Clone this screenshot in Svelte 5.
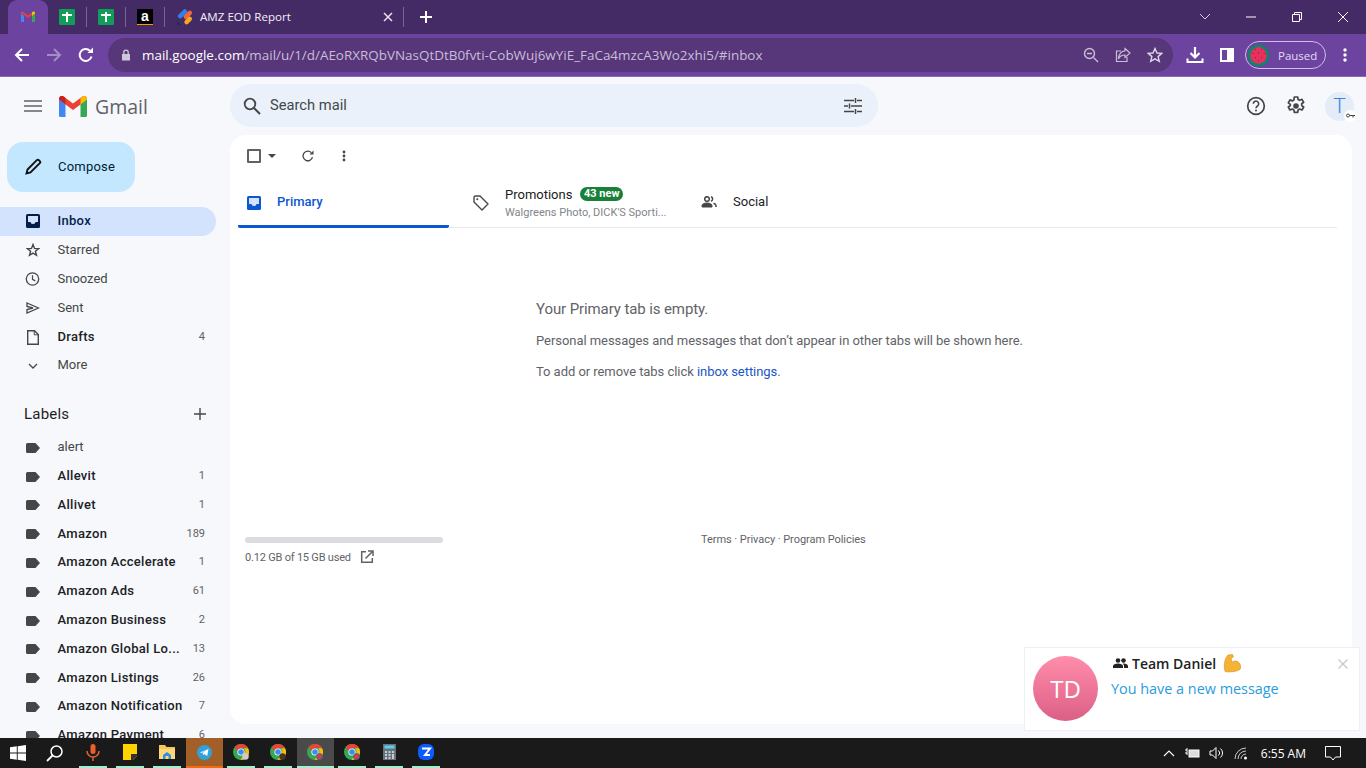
<script>
  const nav = [
    { name: "Inbox", icon: "inbox", active: true },
    { name: "Starred", icon: "star" },
    { name: "Snoozed", icon: "clock" },
    { name: "Sent", icon: "sent" },
    { name: "Drafts", icon: "draft", bold: true, count: "4" },
    { name: "More", icon: "chev" },
  ];

  const labels = [
    { name: "alert" },
    { name: "Allevit", count: "1", bold: true },
    { name: "Allivet", count: "1", bold: true },
    { name: "Amazon", count: "189", bold: true },
    { name: "Amazon Accelerate", count: "1", bold: true },
    { name: "Amazon Ads", count: "61", bold: true },
    { name: "Amazon Business", count: "2", bold: true },
    { name: "Amazon Global Lo...", count: "13", bold: true },
    { name: "Amazon Listings", count: "26", bold: true },
    { name: "Amazon Notification", count: "7", bold: true },
    { name: "Amazon Payment", count: "6", bold: true },
  ];

  const taskApps = ["mic", "notes", "folder", "telegram", "chrome", "chrome", "chrome", "chrome", "calc", "zoom"];
  const seeds = [[8, 5], [14, 5], [5.500, 9], [11, 8.500], [16.500, 9], [8, 13], [14, 13], [11, 16]];
</script>

<div class="screen">
  <!-- tab strip -->
  <div class="tabstrip">
    <div class="tab active">
      <svg width="16" height="16" viewBox="0 0 16 16">
        <path d="M1 4v9h3V7z" fill="#4285f4" />
        <path d="M12 7v6h3V4z" fill="#34a853" />
        <path d="M1 3.500 8 9l7-5.500V3l-1.500-.5L8 6.500 2.500 2.500 1 3z" fill="#ea4335" />
        <path d="M12 3v4l3-2.500V3l-1.500-.5z" fill="#fbbc04" />
      </svg>
    </div>
    <div class="tab small">
      <span class="sheet"></span>
    </div>
    <span class="sep"></span>
    <div class="tab small">
      <span class="sheet"></span>
    </div>
    <span class="sep"></span>
    <div class="tab small">
      <span class="amz">a</span>
    </div>
    <span class="sep"></span>
    <div class="tab wide">
      <svg width="17" height="17" viewBox="0 0 17 17">
        <rect x="1" y="3" width="11" height="4.500" rx="2.200" fill="#2f80ed" transform="rotate(-45 6 5)" />
        <rect x="7" y="3.500" width="10" height="4.500" rx="2.200" fill="#f2663a" transform="rotate(-45 12 6)" />
        <rect x="8" y="9.500" width="9" height="4.500" rx="2.200" fill="#f5a623" transform="rotate(-45 12 12)" />
        <path d="M1 16v-4l4 4z" fill="#1c2c5b" />
      </svg>
      <span class="tabtitle">AMZ EOD Report</span>
      <svg class="tabclose" width="10" height="10" viewBox="0 0 10 10"><path d="M1 1l8 8M9 1 1 9" stroke="#e8e3ee" stroke-width="1.500" /></svg>
    </div>
    <span class="sep"></span>
    <svg class="newtab" width="14" height="14" viewBox="0 0 14 14"><path d="M7 1v12M1 7h12" stroke="#fff" stroke-width="2" /></svg>

    <div class="winctl">
      <svg width="46" height="14" viewBox="0 0 46 14"><path d="M18 4l5 5 5-5" fill="none" stroke="#d5cce0" /></svg>
      <svg width="46" height="14" viewBox="0 0 46 14"><path d="M18 7h10" stroke="#fff" /></svg>
      <svg width="46" height="14" viewBox="0 0 46 14"><path d="M18.500 4.500h7v7h-7zM20.500 4.500v-2h7v7h-2" fill="none" stroke="#fff" /></svg>
      <svg width="46" height="14" viewBox="0 0 46 14"><path d="M18 2l10 10M28 2 18 12" stroke="#fff" /></svg>
    </div>
  </div>

  <!-- toolbar -->
  <div class="toolbar">
    <svg class="tb back" width="16" height="16" viewBox="0 0 16 16"><path d="M15 8H2M8 2 2 8l6 6" fill="none" stroke="#fff" stroke-width="2" /></svg>
    <svg class="tb fwd" width="16" height="16" viewBox="0 0 16 16"><path d="M1 8h13M8 2l6 6-6 6" fill="none" stroke="#a48cc4" stroke-width="2" /></svg>
    <svg class="tb reload" width="16" height="16" viewBox="0 0 16 16"><path d="M13.500 9.500A6 6 0 1 1 12 3.800" fill="none" stroke="#fff" stroke-width="2" /><path d="M9.500 6H15V.5z" fill="#fff" /></svg>
    <div class="omni">
      <svg width="10" height="12" viewBox="0 0 10 12"><path d="M1 5h8v6.500H1z" fill="#cfc6da" /><path d="M2.800 5V3.300a2.200 2.200 0 0 1 4.400 0V5" fill="none" stroke="#cfc6da" stroke-width="1.300" /></svg>
      <span class="url"><b>mail.google.com</b>/mail/u/1/d/AEoRXRQbVNasQtDtB0fvti-CobWuj6wYiE_FaCa4mzcA3Wo2xhi5/#inbox</span>
      <div class="omni-icons">
        <svg width="16" height="16" viewBox="0 0 16 16"><circle cx="6.500" cy="6.500" r="5" fill="none" stroke="#c9bfd6" stroke-width="1.400" /><path d="M10.500 10.500 15 15M4 6.500h5" stroke="#c9bfd6" stroke-width="1.400" /></svg>
        <svg width="16" height="16" viewBox="0 0 16 16"><path d="M10 1.500 15 6l-5 4.500V8C6.500 8 4.500 9.500 3.500 12c0-5 3-8 6.500-8.200z" fill="none" stroke="#c9bfd6" stroke-width="1.200" /><path d="M6 4H1.500v10.500H12V10" fill="none" stroke="#c9bfd6" stroke-width="1.200" /></svg>
        <svg width="16" height="16" viewBox="0 0 16 16"><path d="M8 1.500 10 6l4.800.4-3.700 3.200 1.200 4.700L8 11.800l-4.300 2.500 1.200-4.700L1.200 6.400 6 6z" fill="none" stroke="#dcd5e5" stroke-width="1.400" /></svg>
      </div>
    </div>
    <svg class="tb dl" width="18" height="18" viewBox="0 0 18 18"><path d="M9 1v10M4.500 7 9 11.500 13.500 7" fill="none" stroke="#fff" stroke-width="2.200" /><path d="M1.500 12.500v3.500h15v-3.500" fill="none" stroke="#fff" stroke-width="2" /></svg>
    <span class="sidepanel"><i></i></span>
    <div class="paused">
      <svg width="23" height="23" viewBox="0 0 22 22">
        <circle cx="11" cy="11" r="10.500" fill="#14806e" />
        <circle cx="11" cy="11" r="7.800" fill="#e8305c" />
        {#each seeds as s}
          <circle cx={s[0]} cy={s[1]} r=".5" fill="#7a1636" />
        {/each}
      </svg>
      <span>Paused</span>
    </div>
    <svg class="tb dots" width="4" height="14" viewBox="0 0 4 14"><circle cx="2" cy="2" r="1.700" fill="#fff" /><circle cx="2" cy="7" r="1.700" fill="#fff" /><circle cx="2" cy="12" r="1.700" fill="#fff" /></svg>
  </div>

  <!-- gmail -->
  <div class="gmail">
    <aside class="sidebar">
      <div class="brand">
        <svg class="burger" width="18" height="12" viewBox="0 0 18 12"><path d="M0 1h18M0 6h18M0 11h18" stroke="#5f6368" stroke-width="1.600" /></svg>
        <svg width="28" height="21" viewBox="0 0 28 21">
          <path d="M0 3v16.500A1.500 1.500 0 0 0 1.500 21H6.500V8.500z" fill="#4285f4" />
          <path d="M21.500 8.500V21h5a1.500 1.500 0 0 0 1.500-1.500V3z" fill="#34a853" />
          <path d="M0 3c0-3 3-3.800 5-2.300L14 7.500l9-6.800c2-1.500 5-.7 5 2.300L21.500 8.500 14 14 6.500 8.500z" fill="#ea4335" />
          <path d="M21.500 2v6.500L28 3.500V3c0-3-3-3.800-5-2.300z" fill="#fbbc04" />
          <path d="M0 3.500 6.500 8.500V2L5 .7C3-.8 0 0 0 3z" fill="#c5221f" />
        </svg>
        <span class="wordmark">Gmail</span>
      </div>

      <button class="compose">
        <svg width="17" height="17" viewBox="0 0 17 17"><path d="M1.500 15.500l1-4L11.800 2.200a1.500 1.500 0 0 1 2.100 0l.9.9a1.500 1.500 0 0 1 0 2.100L5.500 14.500z" fill="none" stroke="#111" stroke-width="1.900" /></svg>
        <span>Compose</span>
      </button>

      <div class="navlist">
        {#each nav as item}
          <div class="row" class:active={item.active} class:bold={item.bold}>
            <span class="ico">
              {#if item.icon === "inbox"}
                <svg width="14" height="14" viewBox="0 0 14 14"><rect width="14" height="14" rx="1.500" fill="#041e49" /><path d="M2 2h10v6H9.500a2.500 2 0 0 1-5 0H2z" fill="#d3e3fd" /></svg>
              {:else if item.icon === "star"}
                <svg width="14" height="14" viewBox="0 0 14 14"><path d="M7 1.500 8.500 5.400l4.100.3-3.200 2.600 1.100 4L7 10.100 3.500 12.300l1.100-4L1.400 5.700l4.100-.3z" fill="none" stroke="#444746" stroke-width="1.400" /></svg>
              {:else if item.icon === "clock"}
                <svg width="16" height="16" viewBox="0 0 16 16"><circle cx="8" cy="8" r="6.600" fill="none" stroke="#444746" stroke-width="1.400" /><path d="M8 4v4.300l3 1.700" fill="none" stroke="#444746" stroke-width="1.300" /></svg>
              {:else if item.icon === "sent"}
                <svg width="14" height="12" viewBox="0 0 14 12"><path d="M1 1l11.500 5L1 11V7.500L7 6 1 4.500z" fill="none" stroke="#444746" stroke-width="1.300" /></svg>
              {:else if item.icon === "draft"}
                <svg width="12" height="15" viewBox="0 0 12 15"><path d="M.7.700H7.500L11.300 4.500V14.300H.7z" fill="none" stroke="#444746" stroke-width="1.400" /><path d="M7.200.700V4.800H11.300" fill="none" stroke="#444746" stroke-width="1" /></svg>
              {:else}
                <svg width="10" height="6" viewBox="0 0 10 6"><path d="M1 1l4 4 4-4" fill="none" stroke="#444746" stroke-width="1.300" /></svg>
              {/if}
            </span>
            <span class="name">{item.name}</span>
            {#if item.count}<span class="count">{item.count}</span>{/if}
          </div>
        {/each}
      </div>

      <div class="labels-head">
        <span>Labels</span>
        <svg width="12" height="12" viewBox="0 0 12 12"><path d="M6 0v12M0 6h12" stroke="#444746" stroke-width="1.400" /></svg>
      </div>

      <div class="labellist">
        {#each labels as item}
          <div class="row" class:bold={item.bold}>
            <span class="ico">
              <svg width="14" height="10" viewBox="0 0 14 10"><path d="M1.500 0H9.500L14 5 9.500 10H1.500A1.500 1.500 0 0 1 0 8.500V1.500A1.500 1.500 0 0 1 1.500 0z" fill="#444746" /></svg>
            </span>
            <span class="name">{item.name}</span>
            {#if item.count}<span class="count">{item.count}</span>{/if}
          </div>
        {/each}
      </div>
    </aside>

    <div class="content">
      <header class="topbar">
        <div class="search">
          <svg width="18" height="18" viewBox="0 0 18 18"><circle cx="7" cy="7" r="5.300" fill="none" stroke="#444746" stroke-width="1.800" /><path d="M11 11l6 6" stroke="#444746" stroke-width="2" /></svg>
          <span class="ph">Search mail</span>
          <svg class="tune" width="18" height="16" viewBox="0 0 18 16"><path d="M0 2.500h10M13 2.500h5M0 8h4M7 8h11M0 13.500h10M13 13.500h5M11.500 0v5M5.500 5.500v5M11.500 11v5" stroke="#444746" stroke-width="1.500" /></svg>
        </div>
        <div class="top-icons">
          <svg width="20" height="20" viewBox="0 0 20 20"><circle cx="10" cy="10" r="8.300" fill="none" stroke="#444746" stroke-width="1.700" /><path d="M7.300 7.800a2.700 2.700 0 1 1 4.200 2.200c-1 .7-1.500 1.100-1.500 2.300" fill="none" stroke="#444746" stroke-width="1.600" /><circle cx="10" cy="14.600" r="1" fill="#444746" /></svg>
          <svg width="20" height="20" viewBox="0 0 20 20"><path d="M8.300 1h3.400l.4 2.500 1.500.8 2.400-1 1.700 3-2 1.500v1.700l2 1.500-1.700 3-2.400-1-1.500.9-.4 2.500H8.300l-.4-2.500-1.500-.9-2.400 1-1.700-3 2-1.500V8.400l-2-1.500 1.700-3 2.400 1 1.500-.9z" fill="none" stroke="#444746" stroke-width="1.700" stroke-linejoin="round" /><circle cx="10" cy="10" r="2.800" fill="#444746" /></svg>
          <div class="avatar">
            <span>T</span>
            <span class="keybadge">
              <svg width="9" height="5" viewBox="0 0 9 5"><circle cx="2" cy="2.500" r="1.500" fill="none" stroke="#444" /><path d="M3.500 2.500H9M7 2.500v2" stroke="#444" /></svg>
            </span>
          </div>
        </div>
      </header>

      <main class="card">
        <div class="actions">
          <span class="checkbox"></span>
          <span class="caret"></span>
          <svg class="refresh" width="12" height="12" viewBox="0 0 12 12"><path d="M10.500 7.200A4.800 4.800 0 1 1 9.300 2.600" fill="none" stroke="#444746" stroke-width="1.300" /><path d="M7.500 4.500H11.500V.5z" fill="#444746" /></svg>
          <svg class="more" width="4" height="12" viewBox="0 0 4 12"><circle cx="2" cy="2" r="1.400" fill="#444746" /><circle cx="2" cy="6" r="1.400" fill="#444746" /><circle cx="2" cy="10" r="1.400" fill="#444746" /></svg>
        </div>

        <div class="tabs">
          <div class="mailtab primary">
            <svg width="14" height="14" viewBox="0 0 14 14"><rect width="14" height="14" rx="1.500" fill="#0b57d0" /><path d="M2 2h10v6H9.500a2.500 2 0 0 1-5 0H2z" fill="#d3e3fd" /></svg>
            <span>Primary</span>
          </div>
          <div class="mailtab promo">
            <svg width="16" height="16" viewBox="0 0 16 16"><path d="M1 2.300A1.300 1.300 0 0 1 2.300 1H7l8 8-6 6-8-8z" fill="none" stroke="#444746" stroke-width="1.400" stroke-linejoin="round" /><circle cx="4.300" cy="4.300" r="1" fill="#444746" /></svg>
            <div class="promo-text">
              <div class="promo-title"><span>Promotions</span><span class="badge">43 new</span></div>
              <div class="promo-sub">Walgreens Photo, DICK'S Sporti...</div>
            </div>
          </div>
          <div class="mailtab social">
            <svg width="16" height="12" viewBox="0 0 16 12"><circle cx="6" cy="3" r="2.300" fill="none" stroke="#444746" stroke-width="1.500" /><path d="M1 11V9.500C1 8 3.500 7 6 7s5 1 5 2.500V11z" fill="#444746" stroke="#444746" stroke-width="1" /><path d="M10 .8a2.300 2.300 0 0 1 0 4.400M12.500 7.300c1.500.4 2.500 1.200 2.500 2.200V11" fill="none" stroke="#444746" stroke-width="1.500" /></svg>
            <span>Social</span>
          </div>
        </div>

        <div class="empty">
          <div class="empty-title">Your Primary tab is empty.</div>
          <div class="empty-line">Personal messages and messages that don’t appear in other tabs will be shown here.</div>
          <div class="empty-line">To add or remove tabs click <span class="link">inbox settings</span>.</div>
        </div>

        <div class="footer">
          <div class="storage">
            <div class="bar"></div>
            <div class="used">
              <span>0.12 GB of 15 GB used</span>
              <svg width="14" height="14" viewBox="0 0 14 14"><path d="M6 1.700H1.700v10.600h10.600V8" fill="none" stroke="#5f6368" stroke-width="1.500" /><path d="M5.500 8.500 12 2M8 1h5v5" fill="none" stroke="#5f6368" stroke-width="1.500" /></svg>
            </div>
          </div>
          <div class="terms">Terms · Privacy · Program Policies</div>
        </div>
      </main>
    </div>
  </div>

  <!-- windows taskbar -->
  <div class="taskbar">
    <span class="tbtn start">
      <svg width="16" height="16" viewBox="0 0 16 16"><path d="M0 2.300 6.800 1.300V7.600H0zM7.700 1.200 16 0V7.600H7.700zM0 8.400H6.800V14.700L0 13.700zM7.700 8.400H16V16L7.700 14.800z" fill="#fff" /></svg>
    </span>
    <span class="tbtn find">
      <svg width="17" height="17" viewBox="0 0 17 17"><circle cx="10.500" cy="6.500" r="5.500" fill="none" stroke="#fff" stroke-width="1.500" /><path d="M6.500 10.500 1 16" stroke="#fff" stroke-width="1.800" /></svg>
    </span>
    {#each taskApps as app, i}
      <span class="tbtn app" class:tg={app === "telegram"} class:cur={i === 6}>
        {#if app === "mic"}
          <svg width="14" height="18" viewBox="0 0 14 18"><rect x="4.500" y="1" width="5" height="10" rx="2.500" fill="#e8602c" /><path d="M1 8a6 6 0 0 0 12 0M7 14v4" fill="none" stroke="#e8602c" stroke-width="1.500" /></svg>
        {:else if app === "notes"}
          <svg width="14" height="16" viewBox="0 0 14 16"><path d="M0 0h14v12l-4 4H0z" fill="#ffd200" /><path d="M14 10v2l-4 4h-2v-6z" fill="#333" /></svg>
        {:else if app === "folder"}
          <svg width="16" height="16" viewBox="0 0 16 16"><path d="M0 1h6l1.500 2H16v12H0z" fill="#f6c65b" /><path d="M0 5h16v10H0z" fill="#ffd978" /><path d="M4 11l4-3 4 3v4H4z" fill="#2e8fe6" /><rect x="6.500" y="12" width="3" height="3" fill="#ffd978" /></svg>
        {:else if app === "telegram"}
          <svg width="15" height="15" viewBox="0 0 15 15"><circle cx="7.500" cy="7.500" r="7.500" fill="#2fa3d9" /><path d="M3 7.500l8.500-3.500-1.300 7-3-2-1.200 1.300-.3-2.200 3.500-3-4.600 2.800z" fill="#fff" /></svg>
        {:else if app === "chrome"}
          <svg width="16" height="16" viewBox="0 0 16 16">
            <circle cx="8" cy="8" r="8" fill="#34a853" />
            <path d="M8 0a8 8 0 0 1 7 4.200H8a4 4 0 0 0-3.800 2.700L1.700 3A8 8 0 0 1 8 0z" fill="#ea4335" />
            <path d="M15 4.200A8 8 0 0 1 7.500 16l3.500-5.500A4 4 0 0 0 11 4.200z" fill="#fbbc04" />
            <circle cx="8" cy="8" r="3.600" fill="#fff" /><circle cx="8" cy="8" r="2.800" fill="#4285f4" />
            {#if i > 5}<circle cx="12.500" cy="12.500" r="3" fill="#e8305c" stroke="#16806a" />{:else}<circle cx="12.500" cy="12.500" r="3.200" fill={i === 4 ? "#ccc" : "#4a3524"} />{/if}
          </svg>
        {:else if app === "calc"}
          <svg width="13" height="16" viewBox="0 0 13 16"><rect width="13" height="16" fill="#68727d" /><rect x="1.500" y="1.500" width="10" height="3" fill="#5ad0ee" /><path d="M2 7h2v2H2zM5.500 7h2v2h-2zM9 7h2v2H9zM2 10h2v2H2zM5.500 10h2v2h-2zM9 10h2v5H9zM2 13h2v2H2zM5.500 13h2v2h-2z" fill="#c6ccd2" /></svg>
        {:else}
          <svg width="16" height="16" viewBox="0 0 16 16"><rect width="16" height="16" rx="6" fill="#0b5cff" /><path d="M4 4.500h8L7 11h5" fill="none" stroke="#fff" stroke-width="2" /></svg>
        {/if}
      </span>
    {/each}

    <div class="tray">
      <svg width="12" height="7" viewBox="0 0 12 7"><path d="M1 6l5-5 5 5" fill="none" stroke="#fff" stroke-width="1.100" /></svg>
      <svg width="16" height="12" viewBox="0 0 16 12"><path d="M1 3h2M1 6h2M3 1v7" stroke="#fff" /><rect x="5" y="3" width="10" height="7" fill="#ddd" stroke="#fff" /></svg>
      <svg width="16" height="14" viewBox="0 0 16 14"><path d="M1 5h2.500L7 1.500v11L3.500 9H1zM9.500 4.500a3.500 3.500 0 0 1 0 5M11.500 2.500a6 6 0 0 1 0 9" fill="none" stroke="#fff" /></svg>
      <svg width="14" height="13" viewBox="0 0 14 13"><path d="M1 12A11 11 0 0 1 12 1M4 12A8 8 0 0 1 12 4M7 12A5 5 0 0 1 12 7" fill="none" stroke="#ccc" /><circle cx="11.500" cy="11" r="1.500" fill="#fff" /></svg>
      <span class="clock">6:55 AM</span>
      <svg class="notif" width="16" height="15" viewBox="0 0 16 15"><path d="M.5.500h15v10.500h-5L8 14l-2.500-3H.5z" fill="none" stroke="#fff" /></svg>
    </div>
  </div>

  <!-- chat popup -->
  <div class="toast">
    <div class="toast-avatar">TD</div>
    <div class="toast-body">
      <div class="toast-title">
        <svg width="15" height="10" viewBox="0 0 15 10"><circle cx="5" cy="2.500" r="2.300" fill="#222" /><circle cx="10.500" cy="2.500" r="2.300" fill="#222" /><path d="M0 10V8c0-1.500 2.500-2.500 5-2.500S10 6.500 10 8v2zM11 10V8c0-1-.5-1.700-1.300-2.300 2.600-.4 5.300.7 5.300 2.300v2z" fill="#222" /></svg>
        <span>Team Daniel</span>
        <svg class="arm" width="19" height="19" viewBox="0 0 19 19"><path d="M6 1 10.500.5l1 2.500-2.300 1 .5 4.500c1.500-1.700 4.300-2 6.300-.7 2 1.300 3 4 2.800 6.700-1.800 2.800-9 3.800-15.500 3.300C1.500 14 2 5 6 1z" fill="#f5b335" stroke="#d98e1f" stroke-width=".6" /></svg>
      </div>
      <div class="toast-msg">You have a new message</div>
    </div>
    <svg class="toast-x" width="10" height="10" viewBox="0 0 10 10"><path d="M.5.500l9 9M9.500.500l-9 9" stroke="#c8c8c8" stroke-width="1.200" /></svg>
  </div>
</div>

<style>
  :global(body) {
    margin: 0;
    overflow: hidden;
  }

  .screen {
    position: relative;
    width: 1366px;
    height: 768px;
    display: flex;
    flex-direction: column;
    overflow: hidden;
    font-family: Roboto, sans-serif;
    background: #f6f8fc;
  }

  /* chrome */
  .tabstrip {
    height: 34px;
    flex: none;
    background: #452b66;
    display: flex;
    align-items: center;
    padding-left: 8px;
    font-family: "Open Sans", sans-serif;
  }
  .tab {
    display: flex;
    align-items: center;
    justify-content: center;
    height: 34px;
    box-sizing: border-box;
  }
  .tab.active {
    width: 40px;
    background: #6d43a0;
    border-radius: 9px 9px 0 0;
  }
  .tab.small {
    width: 38px;
  }
  .tab.wide {
    width: 238px;
    justify-content: flex-start;
    padding-left: 11px;
    gap: 7px;
  }
  .sep {
    width: 1px;
    height: 20px;
    background: #7b6495;
    flex: none;
  }
  .sheet {
    width: 16px;
    height: 16px;
    display: block;
    border-radius: 1px;
    background:
      linear-gradient(#fff, #fff) 7px 3px / 2px 10px no-repeat,
      linear-gradient(#fff, #fff) 3px 5px / 10px 2px no-repeat,
      #0f9d58;
  }
  .amz {
    width: 16px;
    height: 16px;
    background: #000;
    color: #fff;
    font: bold 14px/14px "Liberation Sans", sans-serif;
    text-align: center;
    border-bottom: 1px solid #f90;
    box-sizing: border-box;
  }
  .tabtitle {
    color: #f3eff7;
    font-size: 11.600px;
    flex: 1;
    margin-top: -2px;
  }
  .tabclose {
    margin-right: 10px;
  }
  .newtab {
    margin-left: 15px;
  }
  .winctl {
    margin-left: auto;
    display: flex;
    align-items: center;
  }

  .toolbar {
    height: 42px;
    flex: none;
    background: #6d43a0;
    border-bottom: 1px solid #8a6ab0;
    display: flex;
    align-items: center;
    font-family: "Open Sans", sans-serif;
  }
  .tb.back {
    margin-left: 14px;
  }
  .tb.fwd {
    margin-left: 16px;
  }
  .tb.reload {
    margin-left: 16px;
  }
  .omni {
    margin-left: 14px;
    width: 1065px;
    height: 34px;
    box-sizing: border-box;
    background: #573779;
    border-radius: 17px;
    display: flex;
    align-items: center;
    padding-left: 13px;
    gap: 11px;
  }
  .url {
    color: #c9bdd8;
    font-size: 13.450px;
    white-space: nowrap;
  }
  .url b {
    color: #fff;
    font-weight: 400;
  }
  .omni-icons {
    margin-left: auto;
    margin-right: 10px;
    display: flex;
    gap: 16px;
  }
  .tb.dl {
    margin-left: 13px;
  }
  .sidepanel {
    width: 14px;
    height: 14px;
    margin-left: 16px;
    box-sizing: border-box;
    border: 2px solid #fff;
    display: block;
  }
  .sidepanel i {
    display: block;
    width: 5px;
    height: 100%;
    margin-left: auto;
    background: #fff;
  }
  .paused {
    margin-left: 11px;
    width: 81px;
    height: 28px;
    box-sizing: border-box;
    border: 1px solid #cdbfe6;
    border-radius: 14px;
    display: flex;
    align-items: center;
    gap: 8px;
    padding-left: 1px;
    color: #e3dcf5;
    font-size: 11.500px;
  }
  .tb.dots {
    margin-left: 17px;
  }

  /* gmail */
  .gmail {
    flex: 1;
    min-height: 0;
    display: flex;
    background: #f6f8fc;
    color: #202124;
  }
  .sidebar {
    width: 230px;
    flex: none;
    overflow: hidden;
  }
  .brand {
    height: 58px;
    display: flex;
    align-items: center;
    padding-left: 24px;
  }
  .burger {
    margin-right: 17px;
  }
  .wordmark {
    font-family: "Open Sans", sans-serif;
    font-size: 19.500px;
    color: #5f6368;
    margin-left: 8px;
  }
  .compose {
    display: flex;
    align-items: center;
    width: 128px;
    height: 50px;
    margin: 7px 0 15px 7px;
    padding: 0 0 2px 18px;
    gap: 16px;
    border: none;
    border-radius: 16px;
    background: #c2e7ff;
    color: #001d35;
    font: 400 13px Roboto, sans-serif;
    letter-spacing: 0.2px;
  }
  .row {
    height: 28.900px;
    width: 216px;
    box-sizing: border-box;
    display: flex;
    align-items: center;
    padding: 0 11px 0 25px;
    font-size: 13px;
    color: #444746;
    border-radius: 0 15px 15px 0;
  }
  .labellist .row {
    height: 28.800px;
  }
  .row.active {
    background: #d3e3fd;
    color: #041e49;
    font-weight: 500;
    letter-spacing: 0.3px;
  }
  .row.bold {
    font-weight: 500;
    letter-spacing: 0.3px;
    color: #202124;
  }
  .ico {
    width: 15px;
    display: flex;
    justify-content: center;
    margin-right: 17.500px;
    flex: none;
  }
  .name {
    flex: 1;
    white-space: nowrap;
    margin-top: -2px;
  }
  .count {
    font-size: 11px;
    font-weight: 400;
    letter-spacing: 0;
    color: #5f6368;
    margin-top: -2px;
  }
  .labels-head {
    display: flex;
    justify-content: space-between;
    align-items: center;
    width: 206px;
    box-sizing: border-box;
    margin-top: 14px;
    height: 40px;
    padding-left: 24px;
    font-size: 15px;
    font-weight: 400;
    letter-spacing: 0.2px;
    color: #1f1f1f;
  }
  .labellist {
    margin-top: -1px;
  }

  .content {
    flex: 1;
    min-width: 0;
    display: flex;
    flex-direction: column;
  }
  .topbar {
    height: 58px;
    flex: none;
    box-sizing: border-box;
    padding-bottom: 1px;
    display: flex;
    align-items: center;
    justify-content: space-between;
  }
  .search {
    width: 648px;
    height: 43px;
    box-sizing: border-box;
    background: #eaf1fb;
    border-radius: 22px;
    display: flex;
    align-items: center;
    padding: 0 16px 0 13px;
    gap: 9px;
  }
  .ph {
    flex: 1;
    font-size: 14.700px;
    color: #444746;
    margin-top: -2px;
  }
  .top-icons {
    display: flex;
    align-items: center;
    gap: 20px;
    padding-right: 12px;
    padding-top: 1px;
  }
  .avatar {
    position: relative;
    width: 29px;
    height: 29px;
    margin-left: -1px;
    border-radius: 50%;
    background: #e4ecf8;
    color: #3f7fe0;
    font-size: 21px;
    font-weight: 300;
    display: flex;
    align-items: center;
    justify-content: center;
  }
  .keybadge {
    position: absolute;
    right: -2px;
    bottom: -1px;
    width: 12px;
    height: 12px;
    background: #fff;
    border-radius: 50%;
    display: flex;
    align-items: center;
    justify-content: center;
  }

  .card {
    width: 1122px;
    height: 589px;
    box-sizing: border-box;
    background: #fff;
    border-radius: 16px;
    padding: 0 15px 0 8px;
    display: flex;
    flex-direction: column;
  }
  .actions {
    height: 42px;
    display: flex;
    align-items: center;
    padding-left: 9px;
  }
  .checkbox {
    width: 14px;
    height: 14px;
    box-sizing: border-box;
    border: 2px solid #5f6368;
    border-radius: 1px;
  }
  .caret {
    width: 0;
    height: 0;
    margin-left: 7px;
    border: 4px solid transparent;
    border-top-color: #444746;
    border-bottom: none;
  }
  .refresh {
    margin-left: 26px;
  }
  .more {
    margin-left: 28px;
  }
  .tabs {
    height: 51px;
    display: flex;
    border-bottom: 1px solid #e8eaed;
    box-sizing: border-box;
  }
  .mailtab {
    display: flex;
    align-items: center;
    font-size: 13px;
    color: #444746;
    box-sizing: border-box;
    height: 51px;
  }
  .primary {
    width: 211px;
    padding-left: 9px;
    gap: 16px;
    color: #0b57d0;
    font-weight: 500;
    border-bottom: 3px solid #0b57d0;
    border-radius: 0 0 2px 2px;
  }
  .primary svg {
    margin-top: 3px;
  }
  .promo {
    width: 236px;
    padding-left: 24px;
    gap: 16px;
  }
  .promo-title {
    display: flex;
    align-items: center;
    gap: 8px;
    color: #202124;
  }
  .badge {
    background: #188038;
    color: #fff;
    font-size: 11px;
    font-weight: 700;
    border-radius: 7px;
    height: 14px;
    line-height: 14px;
    padding: 0 3.500px;
  }
  .promo-sub {
    color: #80868b;
    font-size: 11px;
    margin-top: 4px;
  }
  .social {
    padding: 0 0 2px 16px;
    gap: 16px;
    color: #202124;
  }
  .empty {
    margin: 71px 0 0 298px;
    color: #5f6368;
    font-size: 13px;
    letter-spacing: -0.05px;
  }
  .empty-title {
    font-size: 15px;
    letter-spacing: -0.1px;
    line-height: 20px;
    margin-bottom: 12px;
  }
  .empty-line {
    line-height: 19px;
    margin-bottom: 12px;
  }
  .link {
    color: #1a56c4;
  }
  .footer {
    margin-top: 144px;
    padding-left: 7px;
    display: flex;
    align-items: flex-start;
    font-size: 11px;
    color: #5f6368;
  }
  .storage {
    width: 198px;
  }
  .bar {
    height: 6px;
    background: #dadce0;
    border-radius: 3px;
  }
  .used {
    margin-top: 7px;
    display: flex;
    align-items: center;
    gap: 9px;
    white-space: nowrap;
    letter-spacing: -0.2px;
  }
  .terms {
    margin: -4px 0 0 258px;
    letter-spacing: -0.05px;
  }

  /* taskbar */
  .taskbar {
    height: 30px;
    flex: none;
    background: #1a1a1a;
    display: flex;
    align-items: center;
    font-family: "Open Sans", sans-serif;
  }
  .tbtn {
    width: 37px;
    height: 30px;
    flex: none;
    box-sizing: border-box;
    display: flex;
    align-items: center;
    justify-content: center;
  }
  .tbtn.start {
    width: 36px;
  }
  .tbtn.find {
    width: 36px;
    margin-right: 2.500px;
  }
  .tbtn.app {
    border-bottom: 2px solid transparent;
    background-image: linear-gradient(#9cf2cc, #9cf2cc);
    background-repeat: no-repeat;
    background-size: 28px 2px;
    background-position: center bottom;
    background-origin: border-box;
    background-clip: border-box;
  }
  .tbtn.tg {
    background: #a35f28;
    border-bottom-color: #f26b10;
  }
  .tbtn.cur {
    background-color: #4a4a4a;
    background-size: 100% 2px;
  }
  .tray {
    margin-left: auto;
    display: flex;
    align-items: center;
    gap: 9px;
    padding-right: 25px;
    color: #fff;
    font-size: 12px;
  }
  .clock {
    margin: 0 10px 0 4px;
  }

  /* popup sits over the mail card */
  .toast {
    position: absolute;
    left: 1024px;
    top: 647px;
    width: 336px;
    height: 84px;
    box-sizing: border-box;
    background: #fff;
    border: 1px solid #eeeff2;
    display: flex;
    align-items: flex-start;
    padding: 8px;
    gap: 13px;
    font-family: "Open Sans", sans-serif;
  }
  .toast-avatar {
    width: 65px;
    height: 65px;
    flex: none;
    border-radius: 50%;
    background: linear-gradient(#ff8dab, #dc5f86);
    color: #fff;
    font-size: 24px;
    display: flex;
    align-items: center;
    justify-content: center;
  }
  .toast-title {
    display: flex;
    align-items: center;
    gap: 4px;
    font-size: 14px;
    font-weight: 600;
    color: #222;
    height: 20px;
    margin: -3px 0 0 2px;
  }
  .arm {
    margin-left: 2px;
  }
  .toast-msg {
    margin-top: 6px;
    color: #2b9be0;
    font-size: 14.400px;
  }
  .toast-x {
    position: absolute;
    top: 11px;
    right: 11px;
  }
</style>
